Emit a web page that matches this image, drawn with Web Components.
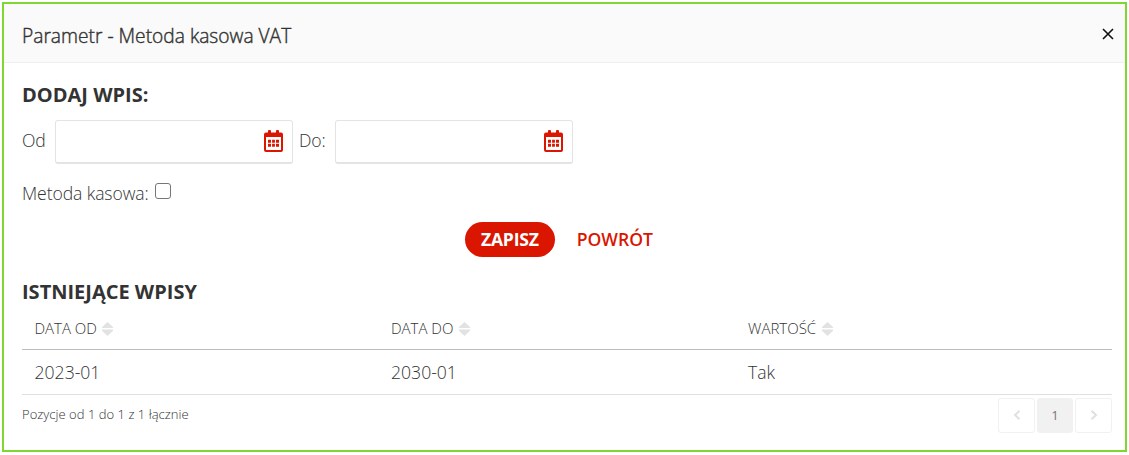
<!DOCTYPE html>
<html lang="pl">
<head>
<meta charset="utf-8">
<title>Parametr - Metoda kasowa VAT</title>
<style>
  body {
    margin: 0;
    padding: 2px;
    background: #fff;
    color: #333;
    font-family: "Open Sans", "Noto Sans", sans-serif;
    font-weight: 300;
    font-size: 17.6px;
  }
</style>
</head>
<body>
<param-dialog>
  <span slot="title">Parametr - Metoda kasowa VAT</span>
  <section-title>DODAJ WPIS:</section-title>
  <form-row style="margin-top: 12px; height: 44px">
    <date-field label="Od" style="--label: 33px"></date-field>
    <date-field label="Do:" style="--label: 36px"></date-field>
  </form-row>
  <form-row style="margin-top: 14px; height: 30px">
    <check-field>Metoda kasowa:</check-field>
  </form-row>
  <form-row style="margin-top: 14px; height: 35px; justify-content: center; --gap: 6px">
    <pill-button primary>ZAPISZ</pill-button>
    <pill-button>POWRÓT</pill-button>
  </form-row>
  <section-title style="margin-top: 22px">ISTNIEJĄCE WPISY</section-title>
  <entry-table></entry-table>
  <table-footer>Pozycje od 1 do 1 z 1 łącznie</table-footer>
</param-dialog>

<script>
class ParamDialog extends HTMLElement {
  constructor() {
    super();
    this.attachShadow({ mode: 'open' });
  }

  connectedCallback() {
    this.shadowRoot.innerHTML = `
      <style>
        :host {
          display: block;
          box-sizing: border-box;
          width: 1125px;
          height: 450px;
          border: 2px solid #7ed82f;
          background: #fff;
        }
        header {
          display: flex;
          align-items: center;
          justify-content: space-between;
          box-sizing: border-box;
          height: 59px;
          padding: 4px 11px 0 18px;
          background: #fafafa;
          border-bottom: 1px solid #f0f0f0;
        }
        .title {
          font-size: 19.2px;
          -webkit-text-stroke: 0.4px #333;
        }
        svg { display: block; margin-top: -3px; }
        main { padding: 19px 13px 0 18px; }
      </style>
      <header>
        <div class="title"><slot name="title"></slot></div>
        <svg width="12" height="12" viewBox="0 0 12 12"><path d="M1 1l10 10M11 1L1 11" stroke="#111" stroke-width="1.6" fill="none"/></svg>
      </header>
      <main><slot></slot></main>
    `;
  }
}

class SectionTitle extends HTMLElement {
  constructor() {
    super();
    this.attachShadow({ mode: 'open' }).innerHTML = `
      <style>
        :host {
          display: block;
          font-size: 20px;
          line-height: 26px;
          font-weight: 700;
        }
      </style>
      <slot></slot>
    `;
  }
}

class FormRow extends HTMLElement {
  constructor() {
    super();
    this.attachShadow({ mode: 'open' }).innerHTML = `
      <style>
        :host {
          display: flex;
          align-items: center;
          gap: var(--gap, 6px);
        }
      </style>
      <slot></slot>
    `;
  }
}

class DateField extends HTMLElement {
  constructor() {
    super();
    this.attachShadow({ mode: 'open' });
  }

  connectedCallback() {
    this.shadowRoot.innerHTML = `
      <style>
        :host { display: flex; align-items: center; }
        label { width: var(--label); margin-top: -4px; letter-spacing: -0.1px; }
        .box {
          display: flex;
          align-items: center;
          justify-content: flex-end;
          box-sizing: border-box;
          width: 238px;
          height: 44px;
          padding: 0 9px 1px 0;
          border: 1px solid #e4e4e4;
          border-bottom-width: 2px;
          border-radius: 3px;
        }
      </style>
      <label>${this.getAttribute('label')}</label>
      <div class="box">
        <svg width="19" height="22" viewBox="0 0 19 22" fill="#da1600">
          <path fill-rule="evenodd" d="M2 2.500h2V1q0-1 1-1h1q1 0 1 1v1.500h5V1q0-1 1-1h1q1 0 1 1v1.500h2q2 0 2 2V20q0 2-2 2H2q-2 0-2-2V4.500q0-2 2-2zM2 7v13h15V7z"/>
          <path d="M4 9.700h3v3H4zM8.100 9.700h2.800v3H8.100zM12 9.700h3v3h-3zM4 13.800h3v2.900H4zM8.100 13.800h2.800v2.900H8.100zM12 13.800h3v2.900h-3z"/>
        </svg>
      </div>
    `;
  }
}

class CheckField extends HTMLElement {
  constructor() {
    super();
    this.attachShadow({ mode: 'open' }).innerHTML = `
      <style>
        :host {
          display: flex;
          align-items: center;
          gap: 6px;
          letter-spacing: -0.1px;
        }
        span { width: 127px; white-space: nowrap; }
        i {
          box-sizing: border-box;
          width: 16px;
          height: 16px;
          margin-top: -4px;
          border: 1px solid #767676;
          border-radius: 3px;
        }
      </style>
      <span><slot></slot></span><i></i>
    `;
  }
}

class PillButton extends HTMLElement {
  constructor() {
    super();
    this.attachShadow({ mode: 'open' }).innerHTML = `
      <style>
        :host {
          display: block;
          box-sizing: border-box;
          height: 35px;
          padding: 0 16px;
          line-height: 34px;
          border-radius: 18px;
          color: #da1600;
          font-size: 17.6px;
          font-weight: 600;
        }
        :host([primary]) {
          background: #da1600;
          color: #fff;
          font-weight: 700;
          letter-spacing: -0.25px;
        }
      </style>
      <slot></slot>
    `;
  }
}

class EntryTable extends HTMLElement {
  constructor() {
    super();
    this.attachShadow({ mode: 'open' });
    this.columns = ['DATA OD', 'DATA DO', 'WARTOŚĆ'];
    this.rows = [['2023-01', '2030-01', 'Tak']];
  }

  connectedCallback() {
    const sort = '<svg width="11" height="14" viewBox="0 0 11 14" fill="#e2e2e2"><path d="M5.500 0L11 5v1H0V5zM0 7.500h11v1.200L5.500 14 0 8.700z"/></svg>';
    const head = this.columns.map(c => `<div class="cell"><span>${c}</span>${sort}</div>`).join('');
    const body = this.rows.map(r => `
      <div class="row">${r.map(v => `<div class="cell"><span>${v}</span></div>`).join('')}</div>
    `).join('');

    this.shadowRoot.innerHTML = `
      <style>
        :host { display: block; }
        .head, .row {
          display: grid;
          grid-template-columns: 356.500px 357px 1fr;
          box-sizing: border-box;
        }
        .head {
          height: 45px;
          border-bottom: 1px solid #bdbdbd;
          font-size: 15px;
        }
        .row {
          height: 45px;
          border-bottom: 1px solid #e0e0e0;
        }
        .cell {
          display: flex;
          align-items: center;
          gap: 6px;
          padding-left: 12.500px;
        }
        .head .cell { padding-top: 2px; gap: 5.500px; }
        .head svg { margin-top: 2px; }
      </style>
      <div class="head">${head}</div>
      ${body}
    `;
  }
}

class TableFooter extends HTMLElement {
  constructor() {
    super();
    this.attachShadow({ mode: 'open' }).innerHTML = `
      <style>
        :host {
          display: flex;
          justify-content: space-between;
          padding-top: 3px;
          font-size: 13px;
        }
        .info { line-height: 33px; letter-spacing: 0.03px; }
        .pager { display: flex; gap: 2px; }
        .page {
          display: flex;
          align-items: center;
          justify-content: center;
          box-sizing: border-box;
          width: 37px;
          height: 35px;
          padding-bottom: 1px;
          border: 1px solid #f1f1f1;
          border-radius: 3px;
        }
        .current {
          width: 36px;
          background: #f1f1f1;
          color: #777;
          font-weight: 400;
        }
        path { fill: none; stroke: #e0e0e0; stroke-width: 2; }
      </style>
      <span class="info"><slot></slot></span>
      <div class="pager">
        <div class="page"><svg width="8" height="10" viewBox="0 0 8 10"><path d="M6.500.8L2 5l4.500 4.200"/></svg></div>
        <div class="page current">1</div>
        <div class="page"><svg width="8" height="10" viewBox="0 0 8 10"><path d="M1.500.8L6 5 1.500 9.200"/></svg></div>
      </div>
    `;
  }
}

customElements.define('param-dialog', ParamDialog);
customElements.define('section-title', SectionTitle);
customElements.define('form-row', FormRow);
customElements.define('date-field', DateField);
customElements.define('check-field', CheckField);
customElements.define('pill-button', PillButton);
customElements.define('entry-table', EntryTable);
customElements.define('table-footer', TableFooter);
</script>
</body>
</html>
